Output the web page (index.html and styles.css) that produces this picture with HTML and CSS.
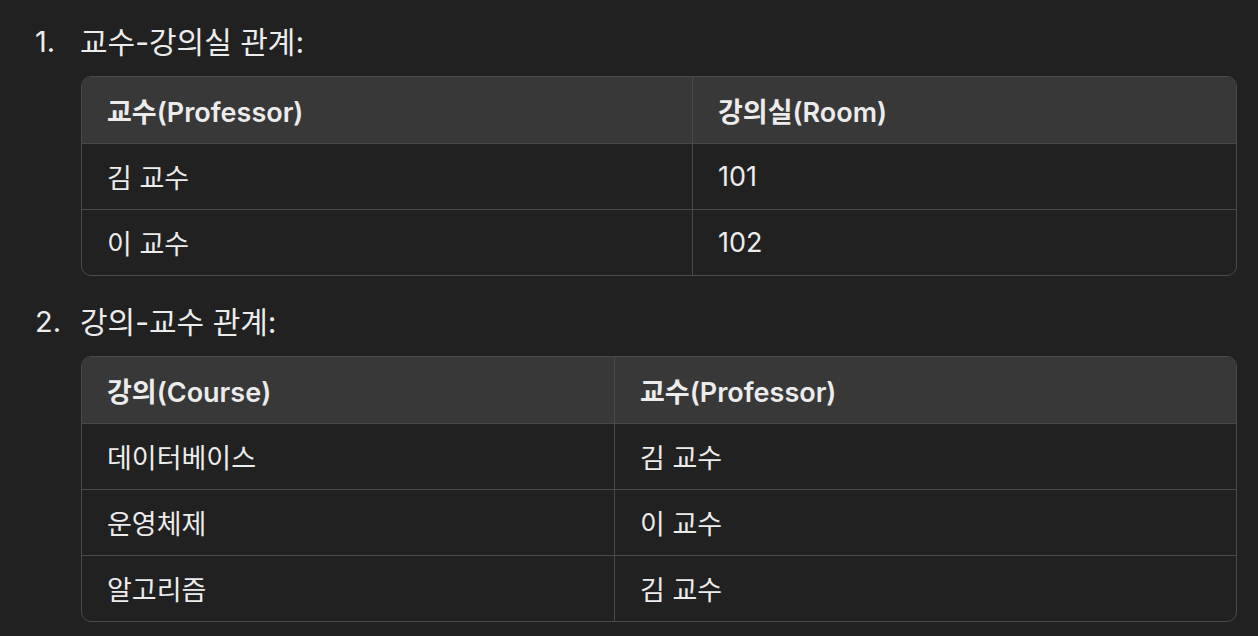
FILE: index.html
```html
<!DOCTYPE html>
<html lang="ko">
<head>
<meta charset="utf-8">
<link rel="stylesheet" href="styles.css">
</head>
<body>
<div class="page">
  <div class="item">
    <div class="num">1.</div>
    <div class="content">
      <div class="title">교수-강의실 관계:</div>
      <table class="tbl t1">
        <thead><tr><th>교수(Professor)</th><th>강의실(Room)</th></tr></thead>
        <tbody>
          <tr><td>김 교수</td><td>101</td></tr>
          <tr><td>이 교수</td><td>102</td></tr>
        </tbody>
      </table>
    </div>
  </div>
  <div class="item">
    <div class="num">2.</div>
    <div class="content">
      <div class="title">강의-교수 관계:</div>
      <table class="tbl t2">
        <thead><tr><th>강의(Course)</th><th>교수(Professor)</th></tr></thead>
        <tbody>
          <tr><td>데이터베이스</td><td>김 교수</td></tr>
          <tr><td>운영체제</td><td>이 교수</td></tr>
          <tr><td>알고리즘</td><td>김 교수</td></tr>
        </tbody>
      </table>
    </div>
  </div>
</div>
</body>
</html>
```

FILE: styles.css
```css
html, body {
  margin: 0;
  padding: 0;
  background: #212121;
}
body {
  font-family: Inter, "Noto Sans CJK KR", sans-serif;
  color: #ececec;
  width: 1258px;
  height: 636px;
  overflow: hidden;
}
.page {
  padding: 24px 21px 0 35px;
  display: flex;
  flex-direction: column;
  gap: 28px;
}
.item {
  display: grid;
  grid-template-columns: 46px 1fr;
}
.num {
  font-size: 29px;
  line-height: 36px;
}
.title {
  font-size: 30px;
  line-height: 36px;
  font-weight: 400;
  margin-left: -1px;
}
.tbl {
  margin-top: 16px;
  width: 100%;
  border-collapse: separate;
  border-spacing: 0;
  border: 1px solid #4a4a4a;
  border-radius: 10px;
  overflow: hidden;
  font-size: 27px;
}
.tbl th, .tbl td {
  height: 66px;
  padding: 0 25px;
  text-align: left;
  box-sizing: border-box;
  border-right: 1px solid #4a4a4a;
  border-top: 1px solid #4a4a4a;
}
.tbl th:last-child, .tbl td:last-child {
  border-right: none;
}
.tbl th {
  border-top: none;
  background: #383838;
  font-weight: 600;
  height: 66px;
}
.t1 th:first-child { width: 611px; }
.t2 th:first-child { width: 533px; }
```
